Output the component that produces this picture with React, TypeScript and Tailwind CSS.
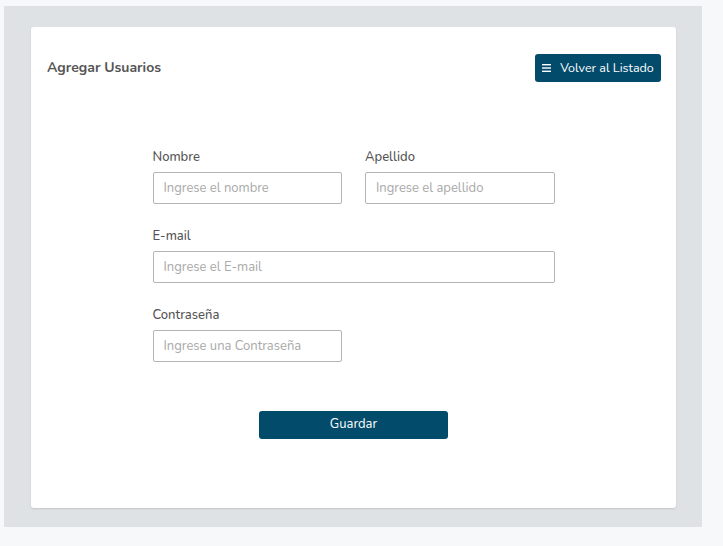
import React from "react";

const font = { fontFamily: "Nunito, Lato, 'Open Sans', sans-serif" };

function Field({ label, placeholder, className = "" }: { label: string; placeholder: string; className?: string }) {
  return (
    <div className={className}>
      <label className="block h-[24px] pt-[1px] text-[13px] leading-[16px] font-medium text-[#555]">{label}</label>
      <input
        type="text"
        placeholder={placeholder}
        className="block w-full h-[32px] border border-[#b5b5b5] rounded-[2px] px-[10px] text-[13px] text-[#555] placeholder:text-[#a9a9a9] outline-none bg-white"
      />
    </div>
  );
}

export default function App() {
  return (
    <div className="w-[723px] h-[546px] bg-[#f7f8fa] pt-[6px] pl-[4px]" style={font}>
      <div className="w-[698px] h-[521px] bg-[#dfe2e5] pt-[21px] pl-[27px]">
        <div className="w-[645px] h-[481px] bg-white rounded-[3px] shadow-[0_1px_2px_rgba(0,0,0,0.12)]">
          <div className="flex items-center justify-between pl-[16px] pr-[15px] pt-[27px]">
            <h1 className="text-[14px] font-bold text-[#555] leading-[20px]">Agregar Usuarios</h1>
            <button className="flex items-center gap-[9px] h-[28px] w-[126px] justify-center bg-[#034b6b] text-white text-[12.5px] rounded-[3px]">
              <svg width="9" height="8" viewBox="0 0 9 8">
                <rect x="0" y="0" width="9" height="1.4" fill="white" />
                <rect x="0" y="3.3" width="9" height="1.4" fill="white" />
                <rect x="0" y="6.6" width="9" height="1.4" fill="white" />
              </svg>
              <span>Volver al Listado</span>
            </button>
          </div>
          <div className="w-[402px] mx-auto mt-[66px]">
            <div className="grid grid-cols-2 gap-x-[23px] gap-y-[23px]">
              <Field label="Nombre" placeholder="Ingrese el nombre" />
              <Field label="Apellido" placeholder="Ingrese el apellido" />
              <Field label="E-mail" placeholder="Ingrese el E-mail" className="col-span-2" />
              <Field label="Contraseña" placeholder="Ingrese una Contraseña" />
            </div>
            <div className="flex justify-center mt-[49px]">
              <button className="w-[189px] h-[28px] bg-[#034b6b] text-white text-[13px] rounded-[3px]">Guardar</button>
            </div>
          </div>
        </div>
      </div>
    </div>
  );
}
